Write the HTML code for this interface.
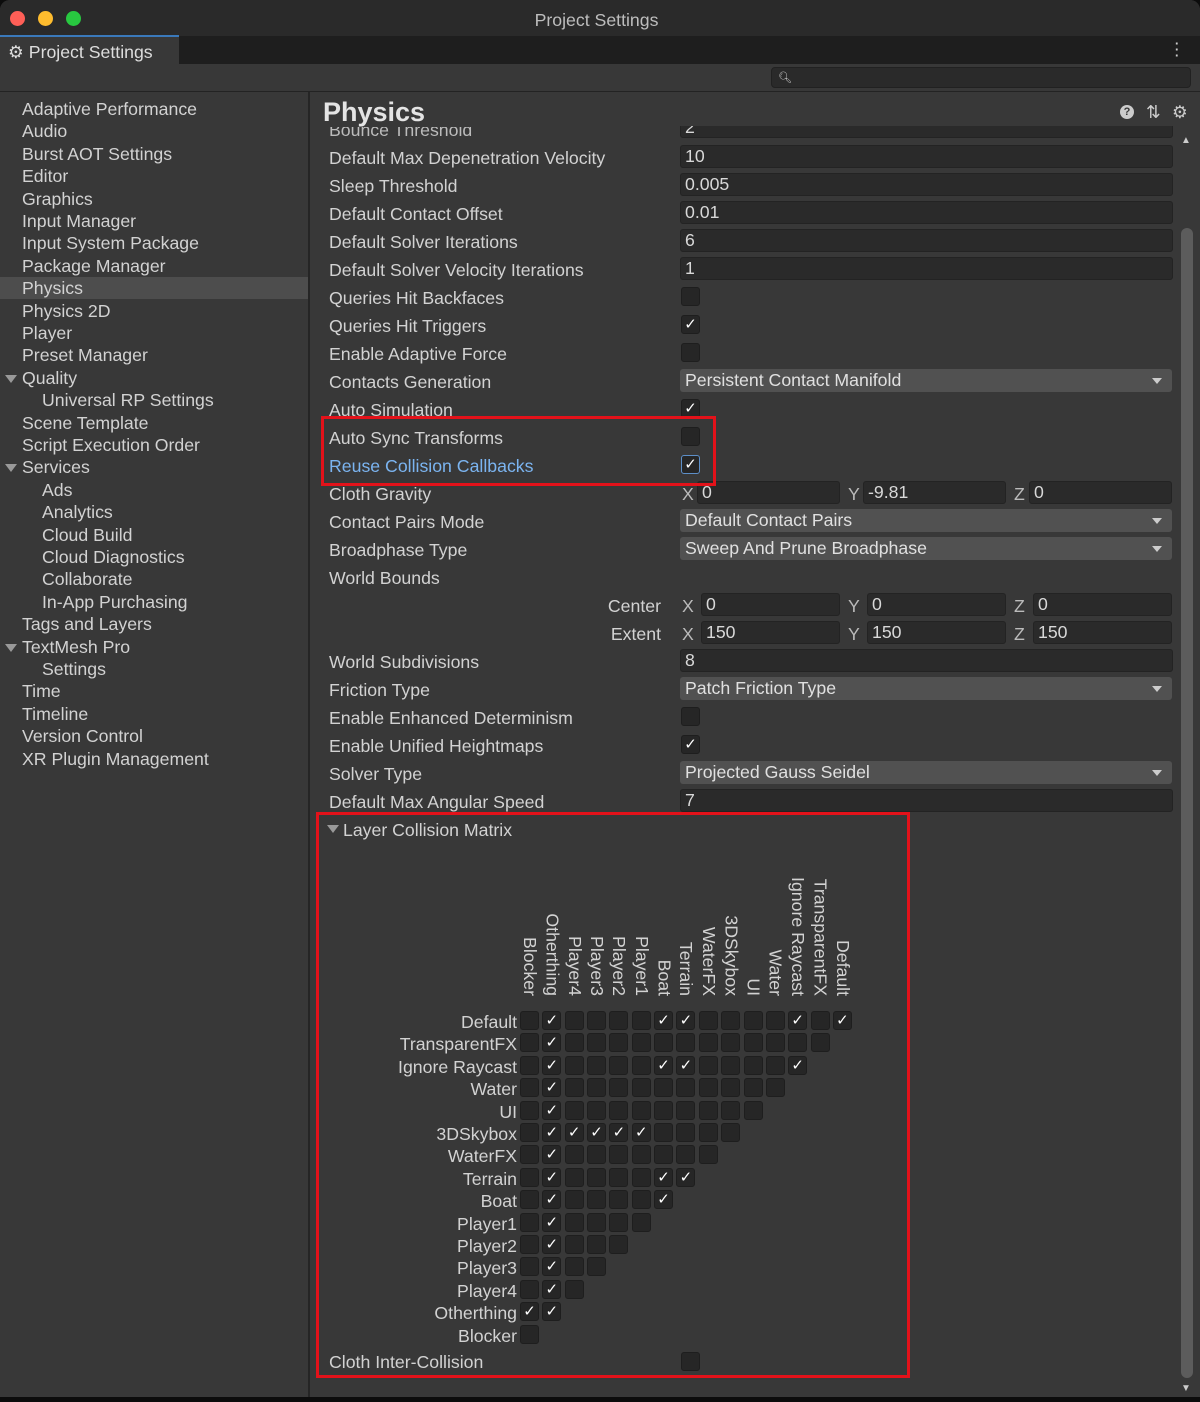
<!DOCTYPE html>
<html><head><meta charset="utf-8"><style>
*{box-sizing:border-box;margin:0;padding:0}
body{width:1200px;height:1402px;background:#0c0c0c;font-family:"Liberation Sans",sans-serif;color:#d2d2d2;position:relative;overflow:hidden}
.a{position:absolute}
.t{position:absolute;font-size:17.7px;line-height:22px;white-space:nowrap}
.f{position:absolute;background:#2a2a2a;border:1px solid #232323;border-radius:3px;height:23px;font-size:17.7px;line-height:21px;padding-left:4px;color:#d8d8d8}
.d{position:absolute;background:#515151;border-radius:3px;height:23px;font-size:17.7px;line-height:23px;padding-left:5px;color:#e0e0e0}
.d:after{content:"";position:absolute;right:10px;top:9px;border-left:5px solid transparent;border-right:5px solid transparent;border-top:6px solid #ccc}
.c{position:absolute;width:19px;height:19px;background:#262626;border:1px solid #1e1e1e;border-radius:3px;color:#fff;font-size:15px;line-height:17px;text-align:center}
</style></head><body>
<div class="a" style="left:0;top:0;width:1200px;height:1397px;background:#383838;border-radius:10px 10px 0 0"></div>
<div class="a" style="left:0;top:0;width:1200px;height:36px;background:#2a2a2a;border-radius:10px 10px 0 0"></div>
<div class="a" style="left:10px;top:11px;width:15px;height:15px;border-radius:50%;background:#fe5f57"></div>
<div class="a" style="left:38px;top:11px;width:15px;height:15px;border-radius:50%;background:#febc2e"></div>
<div class="a" style="left:66px;top:11px;width:15px;height:15px;border-radius:50%;background:#28c840"></div>
<div class="t" style="left:0;width:1193px;text-align:center;top:9px;color:#bdbdbd">Project Settings</div>
<div class="a" style="left:0;top:36px;width:1200px;height:28px;background:#1e1e1e"></div>
<div class="a" style="left:0;top:35px;width:179px;height:29px;background:#383838;border-top:2px solid #3a79bb"></div>
<div class="t" style="left:8px;top:41px;color:#ddd">⚙ Project Settings</div>
<div class="t" style="left:1168px;top:38px;color:#ccc">⋮</div>
<div class="a" style="left:0;top:64px;width:1200px;height:28px;background:#383838;border-bottom:1px solid #232323"></div>
<div class="a" style="left:771px;top:67px;width:420px;height:21px;background:#2a2a2a;border:1px solid #212121;border-radius:4px"></div>
<div class="t" style="left:778px;top:67px;font-size:11px;color:#ccc">🔍︎</div>
<div class="a" style="left:308px;top:92px;width:2px;height:1305px;background:#252525"></div>
<div class="a" style="left:0;top:277px;width:308px;height:22px;background:#4d4d4d"></div>
<div id="side"></div>
<div class="t" style="left:323px;top:97px;font-size:27px;line-height:30px;font-weight:bold;color:#e4e4e4">Physics</div>
<div class="a" style="left:1120px;top:105px;width:14px;height:14px;border-radius:50%;background:#ccc;color:#383838;font-size:11px;font-weight:bold;text-align:center;line-height:14px">?</div>
<div class="t" style="left:1146px;top:101px;color:#ccc">⇅</div>
<div class="t" style="left:1172px;top:101px;color:#ccc">⚙</div>
<div class="a" style="left:1181px;top:228px;width:12px;height:1150px;background:#5c5c5c;border-radius:6px"></div>
<div class="t" style="left:1181px;top:130px;font-size:10px;color:#ccc">▲</div>
<div class="t" style="left:1181px;top:1378px;font-size:10px;color:#ccc">▼</div>
<div id="props"></div>
<div class="a" style="left:321px;top:416px;width:395px;height:70px;border:3px solid #e3121a"></div>
<div class="a" style="left:316px;top:812px;width:594px;height:566px;border:3px solid #e3121a"></div>
<div id="mx"></div>
<script>
var side=[["Adaptive Performance",0],["Audio",0],["Burst AOT Settings",0],["Editor",0],["Graphics",0],["Input Manager",0],["Input System Package",0],["Package Manager",0],["Physics",0],["Physics 2D",0],["Player",0],["Preset Manager",0],["Quality",2],["Universal RP Settings",1],["Scene Template",0],["Script Execution Order",0],["Services",2],["Ads",1],["Analytics",1],["Cloud Build",1],["Cloud Diagnostics",1],["Collaborate",1],["In-App Purchasing",1],["Tags and Layers",0],["TextMesh Pro",2],["Settings",1],["Time",0],["Timeline",0],["Version Control",0],["XR Plugin Management",0]];
var h="";side.forEach(function(s,i){var y=98+i*22.4;h+='<div class="t" style="left:'+(s[1]==1?42:22)+'px;top:'+y+'px">'+s[0]+'</div>';if(s[1]==2)h+='<div class="a" style="left:5px;top:'+(y+8)+'px;border-left:6px solid transparent;border-right:6px solid transparent;border-top:8px solid #999"></div>';});
document.getElementById("side").innerHTML=h;
var P=[["Default Max Depenetration Velocity","f","10"],["Sleep Threshold","f","0.005"],["Default Contact Offset","f","0.01"],["Default Solver Iterations","f","6"],["Default Solver Velocity Iterations","f","1"],["Queries Hit Backfaces","c",0],["Queries Hit Triggers","c",1],["Enable Adaptive Force","c",0],["Contacts Generation","d","Persistent Contact Manifold"],["Auto Simulation","c",1],["Auto Sync Transforms","c",0],["Reuse Collision Callbacks","c",1],["Cloth Gravity","v",["0","-9.81","0"]],["Contact Pairs Mode","d","Default Contact Pairs"],["Broadphase Type","d","Sweep And Prune Broadphase"],["World Bounds","",""],["","v2",["0","0","0"],"Center"],["","v2",["150","150","150"],"Extent"],["World Subdivisions","f","8"],["Friction Type","d","Patch Friction Type"],["Enable Enhanced Determinism","c",0],["Enable Unified Heightmaps","c",1],["Solver Type","d","Projected Gauss Seidel"],["Default Max Angular Speed","f","7"]];
h='<div class="t" style="left:329px;top:119px;color:#bbb;clip-path:inset(8px 0 0 0)">Bounce Threshold</div><div class="f" style="left:680px;top:116px;width:493px;height:22px;clip-path:inset(10px 0 0 0)">2</div>';
P.forEach(function(p,i){var y=147+i*28;var col=i==11?"#7bb4f0":"#d2d2d2";
if(p[0])h+='<div class="t" style="left:329px;top:'+y+'px;color:'+col+'">'+p[0]+'</div>';
if(p[3])h+='<div class="t" style="left:560px;width:101px;text-align:right;top:'+y+'px">'+p[3]+'</div>';
if(p[1]=="f")h+='<div class="f" style="left:680px;top:'+(y-2)+'px;width:493px">'+p[2]+'</div>';
if(p[1]=="d")h+='<div class="d" style="left:680px;top:'+(y-2)+'px;width:492px">'+p[2]+'</div>';
if(p[1]=="c")h+='<div class="c" style="left:681px;top:'+(y)+'px;'+(i==11?'border-color:#5d8fc8;':'')+'">'+(p[2]?'✓':'')+'</div>';
if(p[1]=="v"||p[1]=="v2"){var L=["X","Y","Z"],o=p[1]=="v"?0:4;for(var k=0;k<3;k++){var x=680+k*166;h+='<div class="t" style="left:'+(x+2)+'px;top:'+y+'px;color:#bbb">'+L[k]+'</div><div class="f" style="left:'+(x+17+o)+'px;top:'+(y-2)+'px;width:'+(143-o)+'px">'+p[2][k]+'</div>';}}
});
h+='<div class="a" style="left:327px;top:825px;border-left:6px solid transparent;border-right:6px solid transparent;border-top:8px solid #999"></div><div class="t" style="left:343px;top:819px">Layer Collision Matrix</div>';
h+='<div class="t" style="left:329px;top:1351px">Cloth Inter-Collision</div><div class="c" style="left:681px;top:1352px"></div>';
document.getElementById("props").innerHTML=h;
var rows=["Default","TransparentFX","Ignore Raycast","Water","UI","3DSkybox","WaterFX","Terrain","Boat","Player1","Player2","Player3","Player4","Otherthing","Blocker"];
var cols=["Blocker","Otherthing","Player4","Player3","Player2","Player1","Boat","Terrain","WaterFX","3DSkybox","UI","Water","Ignore Raycast","TransparentFX","Default"];
var ck=[[1,6,7,12,14],[1],[1,6,7,12],[1],[1],[1,2,3,4,5],[1],[1,6,7],[1,6],[1],[1],[1],[1],[0,1],[]];
h="";var px=22.35;
cols.forEach(function(c,j){var x=520+j*px+21;h+='<div class="a" style="left:'+x+'px;top:996px;width:0;height:0"><div class="t" style="right:0;top:0;transform-origin:100% 0;transform:rotate(90deg);left:auto;text-align:right">'+c+'</div></div>';});
rows.forEach(function(r,i){var y=1011+i*22.4;h+='<div class="t" style="left:330px;width:187px;text-align:right;top:'+(y)+'px">'+r+'</div>';
for(var j=0;j<15-i;j++){h+='<div class="c" style="left:'+(520+j*px)+'px;top:'+y+'px">'+(ck[i].indexOf(j)>=0?'✓':'')+'</div>';}});
document.getElementById("mx").innerHTML=h;
</script>
</body></html>
